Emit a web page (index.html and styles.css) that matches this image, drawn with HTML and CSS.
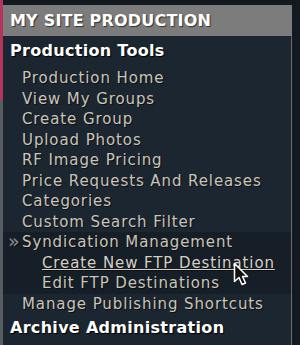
FILE: index.html
```html
<!DOCTYPE html>
<html lang="en">
<head>
  <meta charset="UTF-8">
  <title>My Site Production</title>
  <link rel="stylesheet" href="styles.css">
</head>
<body>
  <div class="frame">
    <div class="stripe"></div>
    <div class="panel">
      <h1 class="panel-title">MY SITE PRODUCTION</h1>
      <div class="panel-body">
        <h2 class="group-title">Production Tools</h2>
        <ul class="menu">
          <li><a href="#">Production Home</a></li>
          <li><a href="#">View My Groups</a></li>
          <li><a href="#">Create Group</a></li>
          <li><a href="#">Upload Photos</a></li>
          <li><a href="#">RF Image Pricing</a></li>
          <li><a href="#">Price Requests And Releases</a></li>
          <li><a href="#">Categories</a></li>
          <li><a href="#">Custom Search Filter</a></li>
          <li class="open">
            <a href="#" class="current">Syndication Management</a>
            <ul class="submenu">
              <li><a href="#" class="hover">Create New FTP Destination</a></li>
              <li><a href="#">Edit FTP Destinations</a></li>
            </ul>
          </li>
          <li><a href="#">Manage Publishing Shortcuts</a></li>
        </ul>
        <h2 class="group-title last">Archive Administration</h2>
      </div>
    </div>
  </div>
  <!-- mouse pointer over the hovered link -->
  <svg class="cursor" width="18" height="26" viewBox="0 0 18 26">
    <path d="M1.5 1.5 L1.5 19.5 L6 15.5 L9 22.5 L12.5 21 L9.5 14.5 L14.5 14.5 Z" fill="#111" stroke="#fff" stroke-width="1.5" stroke-linejoin="round"/>
  </svg>
</body>
</html>
```

FILE: styles.css
```css
html, body {
  margin: 0;
  padding: 0;
}
body {
  background: #121a20;
  width: 300px;
  height: 345px;
  overflow: hidden;
  position: relative;
  font-family: "DejaVu Sans", Verdana, sans-serif;
}
.frame {
  display: flex;
  height: 345px;
}
.stripe {
  width: 3px;
  flex: none;
  background: linear-gradient(#b3345c 0, #b3345c 100px, #575c60 100px);
}
.panel {
  width: 289px;
  margin-top: 5px;
  display: flex;
  flex-direction: column;
}
.panel-title {
  margin: 0;
  height: 31px;
  line-height: 31px;
  background: #7c7c7c;
  color: #fff;
  font-size: 16px;
  font-weight: bold;
  padding-left: 7px;
  text-shadow: 1px 1px 1px #333;
  letter-spacing: 0.2px;
}
.panel-body {
  flex: 1;
  background: #1b2630;
  border-right: 1px solid #6c6c6c;
  padding-top: 3px;
}
.group-title {
  margin: 0;
  padding-left: 7px;
  font-size: 16px;
  line-height: 24px;
  letter-spacing: 0.3px;
  color: #fff;
  font-weight: bold;
  text-shadow: 1px 1px 1px #000;
}
.group-title.last {
  margin-top: 2px;
}
.menu, .submenu {
  list-style: none;
  margin: 0;
  padding: 0;
}
.menu {
  margin-top: 5px;
}
.menu a {
  display: block;
  padding-left: 19px;
  font-size: 15px;
  line-height: 20.5px;
  letter-spacing: 0.9px;
  color: #cbc4b6;
  text-decoration: none;
  text-shadow: 1px 1px 0 #0b1015;
}
.menu .open {
  background: #161f27;
}
.menu .current {
  position: relative;
}
.menu .current::before {
  content: "\00bb";
  position: absolute;
  left: 5px;
  top: -1px;
  color: #8a8a8a;
  font-size: 19px;
  letter-spacing: 0;
}
.submenu a {
  padding-left: 39px;
}
.submenu a.hover {
  text-decoration: underline;
  color: #d6d0c4;
}
.cursor {
  position: absolute;
  left: 233px;
  top: 262px;
}
```
